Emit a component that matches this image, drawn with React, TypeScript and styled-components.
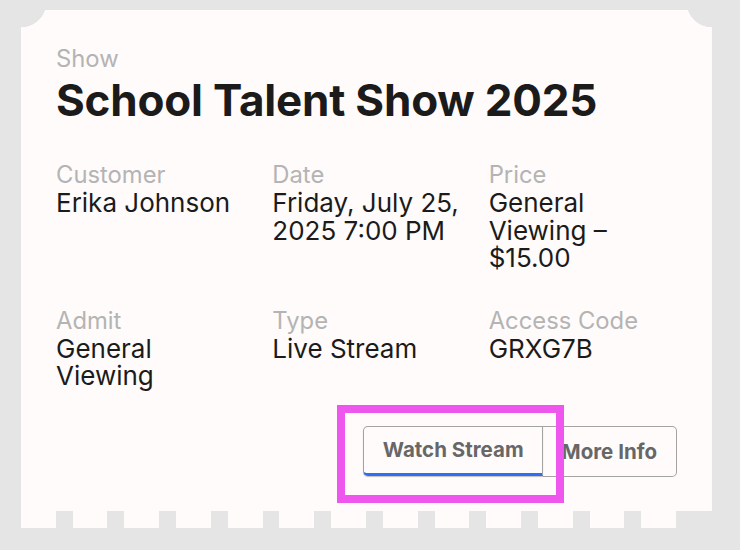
import React from "react";
import styled, { createGlobalStyle } from "styled-components";

const paper = "#fffbfa";

const Global = createGlobalStyle`
  html, body { margin: 0; padding: 0; }
  body {
    background: #e5e5e5;
    font-family: "Inter", "Noto Sans", sans-serif;
    -webkit-font-smoothing: antialiased;
  }
`;

const Page = styled.div`
  padding: 10px 28px 22px 21px;
  width: 691px;
`;

const Ticket = styled.div`
  display: flex;
  flex-direction: column;
  width: 691px;
`;

const Body = styled.div`
  box-sizing: border-box;
  height: 501px;
  padding: 35px 35px 0 35px;
  display: flex;
  flex-direction: column;
  background:
    radial-gradient(circle at 0 -8px, transparent 25px, ${paper} 25.6px) left top / 50.5% 100% no-repeat,
    radial-gradient(circle at 100% -8px, transparent 25px, ${paper} 25.6px) right top / 50.5% 100% no-repeat;
`;

const Teeth = styled.div`
  width: 656px;
  height: 17px;
  background: repeating-linear-gradient(
    to right,
    ${paper} 0 34.7px,
    transparent 34.7px 51.7px
  );
`;

const Label = styled.div`
  font-size: 23.8px;
  line-height: 28px;
  color: #b4b4b4;
  font-weight: 400;
`;

const Title = styled.h1`
  margin: 4px 0 0 0;
  font-size: 44px;
  line-height: 46px;
  font-weight: 700;
  color: #1b1b1b;
  letter-spacing: -0.2px;
`;

const Grid = styled.div`
  margin-top: 38px;
  display: grid;
  grid-template-columns: repeat(3, 1fr);
  column-gap: 28px;
  row-gap: 35px;
`;

const Field = styled.div`
  display: flex;
  flex-direction: column;
`;

const Value = styled.div`
  font-size: 26px;
  line-height: 27.6px;
  color: #1b1b1b;
`;

const Actions = styled.div`
  margin-top: 36px;
  display: flex;
  justify-content: flex-end;
`;

const Group = styled.div`
  display: flex;
  height: 51px;
`;

const Highlightable = styled.div`
  position: relative;
  display: flex;
`;

const Highlight = styled.div`
  position: absolute;
  top: -21px;
  left: -26px;
  right: -21px;
  bottom: -26px;
  border: 8.5px solid #ee56ee;
  box-sizing: border-box;
  pointer-events: none;
  z-index: 2;
`;

const Button = styled.button<{ $active?: boolean; $side: "left" | "right" }>`
  box-sizing: border-box;
  height: ${(p) => (p.$active ? "50px" : "51px")};
  margin: 0;
  padding: 0 ${(p) => (p.$side === "left" ? "18px" : "19px")} 0 19px;
  font-family: "Inter", "Noto Sans", sans-serif;
  font-size: 20.5px;
  font-weight: 700;
  color: #676767;
  background: ${paper};
  border: 1px solid #a3a3a3;
  border-left-width: ${(p) => (p.$side === "right" ? "0" : "1px")};
  border-radius: ${(p) => (p.$side === "left" ? "5px 0 0 5px" : "0 5px 5px 0")};
  border-bottom: ${(p) => (p.$active ? "3px solid #2c6ff0" : "1px solid #a3a3a3")};
  box-shadow: ${(p) => (p.$active ? "0 1px 1px rgba(0,0,0,0.25)" : "none")};
  cursor: pointer;
`;

const fields: { label: string; value: string }[] = [
  { label: "Customer", value: "Erika Johnson" },
  { label: "Date", value: "Friday, July 25, 2025 7:00 PM" },
  { label: "Price", value: "General Viewing – $15.00" },
  { label: "Admit", value: "General Viewing" },
  { label: "Type", value: "Live Stream" },
  { label: "Access Code", value: "GRXG7B" },
];

export default function App() {
  return (
    <>
      <Global />
      <Page>
        <Ticket>
          <Body>
            <Label>Show</Label>
            <Title>School Talent Show 2025</Title>
            <Grid>
              {fields.map((f) => (
                <Field key={f.label}>
                  <Label>{f.label}</Label>
                  <Value>{f.value}</Value>
                </Field>
              ))}
            </Grid>
            <Actions>
              <Group>
                <Highlightable>
                  <Button $side="left" $active>
                    Watch Stream
                  </Button>
                  <Highlight />
                </Highlightable>
                <Button $side="right">More Info</Button>
              </Group>
            </Actions>
          </Body>
          <Teeth />
        </Ticket>
      </Page>
    </>
  );
}
